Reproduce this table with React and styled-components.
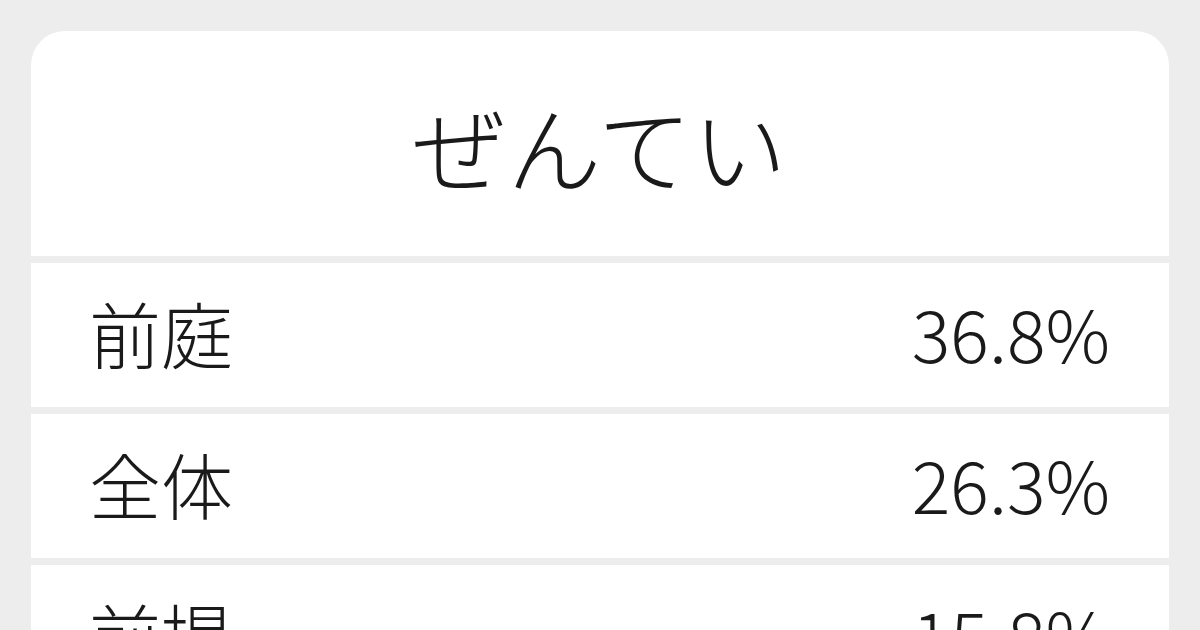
import React from "react"
import styled, { createGlobalStyle } from "styled-components"

const GlobalStyle = createGlobalStyle`
  html, body {
    margin: 0;
    padding: 0;
    background: #ededed;
  }
  body {
    font-family: "Noto Sans CJK JP", "Noto Sans", sans-serif;
    color: #1a1a1a;
  }
`

const Page = styled.div`
  width: 1200px;
  height: 630px;
  overflow: hidden;
  padding: 31px 31px 0;
  box-sizing: border-box;
`

const Card = styled.div`
  display: flex;
  flex-direction: column;
  gap: 7px;
  border-radius: 34px 34px 0 0;
  overflow: hidden;
`

const Title = styled.h1`
  margin: 0;
  height: 225px;
  display: flex;
  align-items: center;
  justify-content: center;
  padding-top: 2px;
  box-sizing: border-box;
  background: #fff;
  font-size: 94px;
  font-weight: 200;
  line-height: 1;
  letter-spacing: 1px;
`

const Row = styled.div`
  height: 144px;
  flex-shrink: 0;
  display: flex;
  align-items: center;
  justify-content: space-between;
  padding: 0 59px 6px 58px;
  box-sizing: border-box;
  background: #fff;
  font-size: 72px;
  font-weight: 200;
  line-height: 1;
`

const Word = styled.span``

const Percent = styled.span`
  font-variant-numeric: tabular-nums;
`

const rows = [
  { word: "前庭", pct: "36.8%" },
  { word: "全体", pct: "26.3%" },
  { word: "前提", pct: "15.8%" },
]

export default function App() {
  return (
    <>
      <GlobalStyle />
      <Page>
        <Card>
          <Title>ぜんてい</Title>
          {rows.map(r => (
            <Row key={r.word}>
              <Word>{r.word}</Word>
              <Percent>{r.pct}</Percent>
            </Row>
          ))}
        </Card>
      </Page>
    </>
  )
}
